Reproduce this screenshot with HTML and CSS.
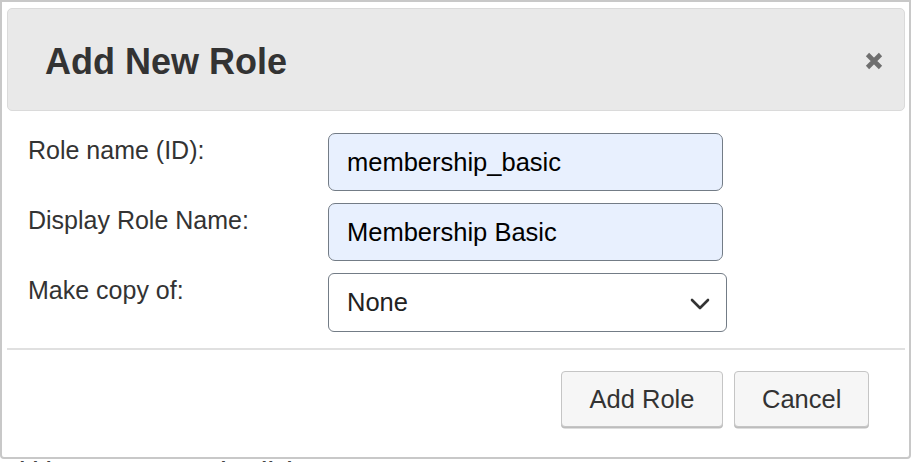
FILE: index.html
```html
<!DOCTYPE html>
<html lang="en">
<head>
<meta charset="utf-8">
<title>Add New Role</title>
<link rel="stylesheet" href="styles.css">
</head>
<body>
<div class="dialog" role="dialog" aria-labelledby="dlg-title">
  <div class="titlebar">
    <h1 class="title" id="dlg-title">Add New Role</h1>
    <button class="close" type="button" aria-label="Close">
      <svg width="20" height="20" viewBox="0 0 20 20" aria-hidden="true">
        <path d="M3.5 3.5 L16.5 16.5 M16.5 3.5 L3.5 16.5" stroke="#6f6f6f" stroke-width="4.6" stroke-linecap="butt" fill="none"/>
      </svg>
    </button>
  </div>
  <div class="content">
    <form class="form">
      <label class="label" for="role-id">Role name (ID):</label>
      <input class="field filled" id="role-id" type="text" value="membership_basic">
      <label class="label" for="role-name">Display Role Name:</label>
      <input class="field filled" id="role-name" type="text" value="Membership Basic">
      <label class="label" for="role-copy">Make copy of:</label>
      <div class="select" id="role-copy">
        <span class="select-value">None</span>
        <svg class="chevron" width="20" height="12" viewBox="0 0 20 12" aria-hidden="true">
          <path d="M2 2 L10 10 L18 2" stroke="#333" stroke-width="2.6" fill="none" stroke-linecap="round" stroke-linejoin="round"/>
        </svg>
      </div>
    </form>
  </div>
  <div class="buttonpane">
    <button class="btn btn-add" type="button">Add Role</button>
    <button class="btn btn-cancel" type="button">Cancel</button>
  </div>
</div>
<p class="behind">Hidden page text under dialog</p>
</body>
</html>
```

FILE: styles.css
```css
html, body {
  margin: 0;
  padding: 0;
  background: #ffffff;
  overflow: hidden;
}

body {
  width: 912px;
  height: 462px;
  font-family: "Liberation Sans", Arial, sans-serif;
  color: #333333;
}

.dialog {
  width: 911px;
  box-sizing: border-box;
  border: 2px solid #c8c8c8;
  border-radius: 0 0 4px 4px;
  padding: 6px 4px 0 5px;
  background: #ffffff;
}

.titlebar {
  height: 103px;
  box-sizing: border-box;
  border: 1px solid #dadada;
  border-radius: 5px;
  background: #e9e9e9;
  display: flex;
  align-items: center;
  justify-content: space-between;
  padding: 5px 20px 0 37px;
}

.title {
  margin: 0;
  font-size: 36px;
  font-weight: bold;
  color: #333333;
  line-height: 1;
}

.close {
  border: 0;
  background: transparent;
  padding: 0;
  width: 20px;
  height: 20px;
  display: flex;
  margin-top: -3px;
}

.content {
  padding: 22px 0 16px 21px;
  border-bottom: 2px solid #e0e0e0;
}

.form {
  display: grid;
  grid-template-columns: 300px 395px;
  row-gap: 12px;
  margin: 0;
}

.label {
  font-size: 25px;
  color: #333333;
  padding-top: 3px;
  line-height: 29px;
}

.field {
  box-sizing: border-box;
  height: 58px;
  width: 395px;
  margin: 0;
  border: 1.5px solid #737c86;
  border-radius: 7px;
  padding: 0 18px;
  font-family: "Liberation Sans", Arial, sans-serif;
  font-size: 25.5px;
  color: #000000;
  outline: none;
}

.filled {
  background: #e8f0fe;
}

.select {
  box-sizing: border-box;
  height: 59px;
  width: 399px;
  border: 1.5px solid #737c86;
  border-radius: 6px;
  background: #ffffff;
  display: flex;
  align-items: center;
  justify-content: space-between;
  padding: 0 16px 0 18px;
  font-size: 25.5px;
  color: #222222;
}

.chevron {
  display: block;
  margin-top: 2px;
}

.buttonpane {
  display: flex;
  justify-content: flex-end;
  gap: 11px;
  padding: 21px 36px 30px 0;
}

.btn {
  height: 56px;
  box-sizing: border-box;
  border: 1.5px solid #c5c5c5;
  border-radius: 4px;
  background: #f6f6f6;
  box-shadow: 0 1.5px 0 #bdbdbd;
  font-family: "Liberation Sans", Arial, sans-serif;
  font-size: 25.5px;
  color: #333333;
  padding: 0 27px;
}

.btn-add {
  width: 162px;
}

.btn-cancel {
  width: 135px;
}

.behind {
  margin: 0 0 0 4px;
  font-size: 20px;
  line-height: 20px;
  font-weight: bold;
  color: #444444;
  letter-spacing: 1px;
}
```
